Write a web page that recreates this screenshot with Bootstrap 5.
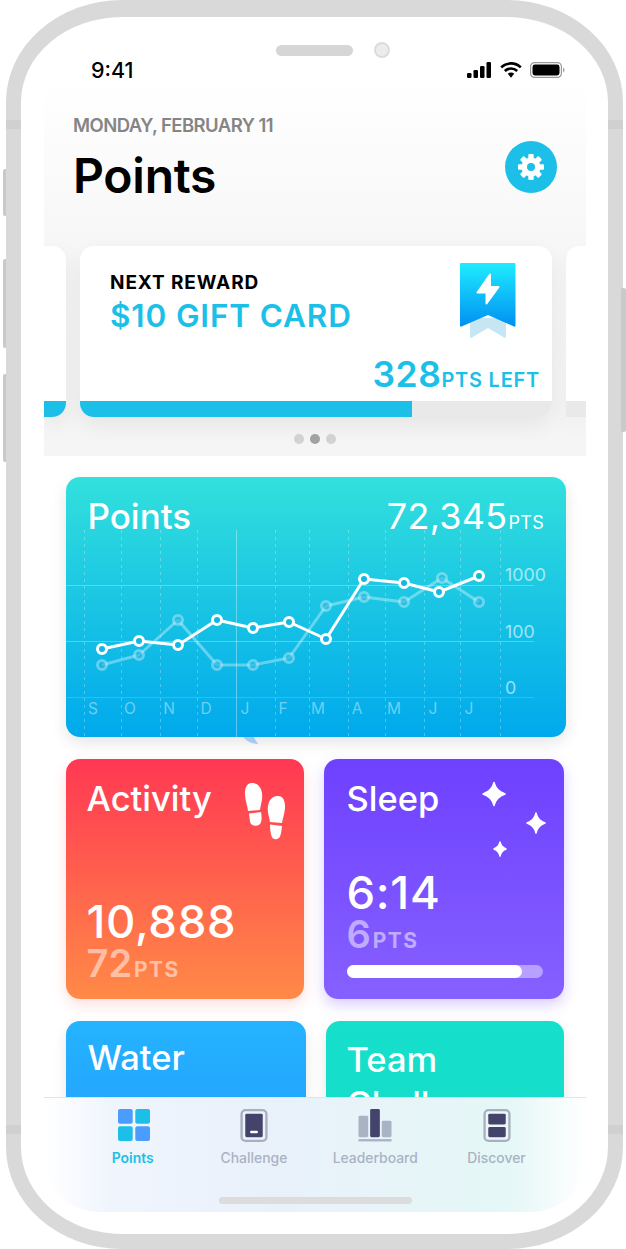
<!DOCTYPE html>
<html lang="en">
<head>
<meta charset="utf-8">
<title>Points</title>
<link href="https://cdn.jsdelivr.net/npm/bootstrap@5.3.0/dist/css/bootstrap.min.css" rel="stylesheet">
<style>
html,body{margin:0;background:#fff;width:626px;height:1249px;overflow:hidden}
body{font-family:Inter,"Noto Sans",sans-serif;color:#000;position:relative}
.phone{position:relative;margin-left:6px;width:617px;height:1249px;border-style:solid;border-color:#d9d9d9;border-width:17px 15px 15px 15px;border-radius:116px/102px;background:#fff;padding:0 22px 0 23px}
.hw{position:absolute;background:#c9c9c9;border-radius:2px;width:5px}
.hw1{left:3px;top:169px;height:47px}.hw2{left:3px;top:259px;height:89px}.hw3{left:3px;top:374px;height:88px}.hw4{left:621px;top:288px;height:144px}
.band{position:absolute;background:#d0d0d0;height:9px;width:15px}
.b1{left:6px;top:120px}.b2{left:608px;top:120px}.b3{left:6px;top:1125px}.b4{left:608px;top:1125px}
.notch{margin-top:25px;height:16px;padding-left:232px;gap:21px}
.speaker{width:77px;height:11px;border-radius:6px;background:#d6d6d6}
.cam{width:16px;height:16px;border-radius:50%;background:#ececec;border:2px solid #dcdcdc}
.status{margin-top:2px;height:20px;padding-left:48px;padding-right:21px}
.clock{font-size:21.5px;font-weight:500;line-height:20px;margin-left:-1px}
.sig{gap:8px}
.screen{position:relative;height:1132px;overflow:hidden;border-radius:0 0 55px 55px}
.head{height:160px;padding:33px 29px 0 29px;background:linear-gradient(#fff,#f7f7f7)}
.date{font-size:18.5px;font-weight:600;color:#858585;line-height:24px;letter-spacing:-.55px;margin-bottom:10px}
.ttl{font-size:48px;font-weight:600;line-height:58px;letter-spacing:-.25px}
.gear{width:52px;height:52px;border-radius:50%;background:#1cbfe7;margin-top:28px}
.reward{height:216px;padding-top:6px;background:linear-gradient(#f7f7f7,#f5f5f5);overflow:hidden}
.rtrack{gap:14px}
.rc{height:171px;background:#fff;box-shadow:0 8px 22px rgba(0,0,0,.07);overflow:hidden;display:flex;flex-direction:column}
.rl{width:22px;border-radius:0 14px 14px 0}
.rm{width:472px;border-radius:14px}
.rr{width:20px;border-radius:14px 0 0 0;box-shadow:0 8px 22px rgba(0,0,0,.04)}
.rtop{padding:25px 36px 0 30px}
.nr{font-size:19px;font-weight:700;line-height:24px;letter-spacing:.9px}
.gc{font-size:31.5px;font-weight:600;line-height:38px;letter-spacing:.85px;color:#1cbfe7;margin-top:2px}
.ribbon{margin-top:-8px}
.left{margin-top:17px;padding-right:12px;color:#1cbfe7;font-weight:600;line-height:40px;align-items:baseline}
.left b{font-weight:600;font-size:35.5px;letter-spacing:.5px}
.left span{font-size:20px;letter-spacing:.75px}
.rbar{height:16px;margin-top:auto;background:#e9e9e9}
.rfill{height:16px;background:#1cbfe7}
.rfill-m{width:332px}
.rfill-l{width:100%}
.dots{gap:6px;margin-top:17px}
.dt{width:10px;height:10px;border-radius:50%;background:#d2d2d2}
.dt-on{background:#a2a2a2}
.pad{padding:21px 0 0 22px;background:#fff;position:relative;height:641px;overflow:hidden}
.chart{position:relative;width:500px;height:260px;border-radius:14px;background:linear-gradient(#32e0dc,#00a9ec);color:#fff;box-shadow:0 6px 16px rgba(0,0,0,.1)}
.chd{height:53px;padding:18px 22px 0 21.5px;font-size:35px;font-weight:500;line-height:42px;overflow:visible}
.chd .big{font-weight:400;letter-spacing:.25px;font-size:36px}
.chd small{font-size:18px;font-weight:400;letter-spacing:.3px;margin-left:1px}
.chart svg{display:block}
.chip{position:absolute;left:177px;top:260px}
.tiles{gap:20px;margin-top:22px}
.tile{position:relative;height:240px;border-radius:14px;color:#fff;padding:18px 20px 11.5px 20.5px;box-shadow:0 6px 14px rgba(0,0,0,.1);overflow:hidden}
.w238{width:238px}.w240{width:240px}
.act{background:linear-gradient(#ff3853,#ff8a47);box-shadow:0 6px 14px rgba(255,80,80,.18)}
.slp{background:linear-gradient(#6e41ff,#8660ff);box-shadow:0 6px 14px rgba(110,65,255,.25);padding-left:22.5px;padding-right:22px;padding-bottom:16px}
.wat{background:linear-gradient(#25b3ff,#1e8ffc);padding-left:21.5px;padding-top:14.5px}
.tea{background:linear-gradient(#16e0cb,#12d8ca);padding-left:20.5px;padding-top:16.5px}
.tname{font-size:34.5px;font-weight:500;line-height:44px}
.tval{font-size:45.5px;font-weight:500;line-height:46px;letter-spacing:.7px}
.tpt{line-height:36px;font-weight:600;color:rgba(255,255,255,.5);align-items:baseline}
.tpt b{font-size:38px;font-weight:600}
.tpt span{font-size:21px;letter-spacing:1.4px;margin-left:2px;font-weight:700}
.tfoot{margin-top:auto}
.sbar{height:13px;border-radius:7px;background:rgba(255,255,255,.42);margin-top:6px;width:196px;margin-bottom:5px}
.sfill{height:13px;border-radius:7px;background:#fff;width:175px}
.feet{position:absolute;left:178px;top:23px}
.stars{position:absolute;left:155px;top:20px}
.tabs{position:absolute;left:0;right:0;top:1017px;height:115px;padding:0 28px;border-top:1px solid #e1e4e8;background:linear-gradient(90deg,#fff,#f0f5fd 12%,#e9f1fb 40%,#e5f7f6 86%,#fff)}
.tab{width:121.3px;text-align:center;padding-top:11px;font-size:13.9px;line-height:18px;color:#aab3c3;font-weight:500}
.tab svg{display:block;margin:0 auto 7px}
.tab-on{color:#1cbfe7;font-weight:600}
.home{position:absolute;left:175px;top:99px;width:193px;height:7px;border-radius:4px;background:#dcdcdc}
</style>
</head>
<body>
<i class="hw hw1"></i><i class="hw hw2"></i><i class="hw hw3"></i>
<div class="phone">
  <div class="notch d-flex align-items-center"><div class="speaker"></div><div class="cam"></div></div>
  <div class="status d-flex justify-content-between align-items-center">
    <div class="clock">9:41</div>
    <div class="sig d-flex align-items-center">
      <svg width="25" height="16" viewBox="0 0 25 16"><g fill="#000"><rect x="0" y="11" width="4.5" height="5" rx="1.2"/><rect x="6.5" y="8" width="4.5" height="8" rx="1.2"/><rect x="13" y="4" width="4.5" height="12" rx="1.2"/><rect x="19.5" y="0" width="4.5" height="16" rx="1.2"/></g></svg>
      <svg width="22" height="16" viewBox="0 0 22 16"><g fill="none" stroke="#000" stroke-width="2.6"><path d="M1.2 5.4a14 14 0 0 1 19.6 0"/><path d="M4.8 9a9 9 0 0 1 12.4 0"/></g><path d="M7.8 11.8a4.6 4.6 0 0 1 6.4 0L11 15.8z" fill="#000"/></svg>
      <svg width="35" height="16" viewBox="0 0 35 16"><rect x=".6" y=".6" width="30.8" height="14.8" rx="4" fill="none" stroke="#9a9a9a" stroke-width="1.2"/><rect x="2.5" y="2.5" width="27" height="11" rx="2.4" fill="#000"/><path d="M33 5.5c1.2.4 1.6 1.4 1.6 2.5s-.4 2.1-1.6 2.5z" fill="#aaa"/></svg>
    </div>
  </div>
  <div class="screen">
    <div class="head d-flex justify-content-between align-items-start">
      <div>
        <div class="date">MONDAY, FEBRUARY 11</div>
        <div class="ttl">Points</div>
      </div>
      <div class="gear d-flex align-items-center justify-content-center">
        <svg width="28" height="28" viewBox="0 0 28 28"><g fill="#fff"><circle cx="14" cy="14" r="9.5"/><rect x="11.3" y="1" width="5.4" height="26" rx="1"/><rect x="11.3" y="1" width="5.4" height="26" rx="1" transform="rotate(45 14 14)"/><rect x="11.3" y="1" width="5.4" height="26" rx="1" transform="rotate(90 14 14)"/><rect x="11.3" y="1" width="5.4" height="26" rx="1" transform="rotate(135 14 14)"/></g><circle cx="14" cy="14" r="4" fill="#1cbfe7"/></svg>
      </div>
    </div>
    <div class="reward">
      <div class="rtrack d-flex">
        <div class="rc rl"><div class="rbar"><div class="rfill rfill-l"></div></div></div>
        <div class="rc rm">
          <div class="rtop d-flex justify-content-between align-items-start">
            <div>
              <div class="nr">NEXT REWARD</div>
              <div class="gc">$10 GIFT CARD</div>
            </div>
            <svg class="ribbon" width="56" height="75" viewBox="461 263 56 75">
              <defs><linearGradient id="rg" x1="0" y1="0" x2="0" y2="1"><stop offset="0" stop-color="#1fecff"/><stop offset="1" stop-color="#0090f2"/></linearGradient></defs>
              <path d="M471 318H507V336.500Q507 338.500 505 337.500L489 328L473 337.500Q471 338.500 471 336.500Z" fill="#c6e6f3"/>
              <path d="M462 263H515.500Q516.500 263 516.500 264V325.500Q516.500 327 515 326.500L489 315L462.500 326.500Q461 327 461 325.500V264Q461 263 462 263Z" fill="url(#rg)"/>
              <path d="M491 274.500L478.500 292.500H487.500V303.500L499.500 287H491Z" fill="#fff" stroke="#fff" stroke-width="2" stroke-linejoin="round"/>
            </svg>
          </div>
          <div class="left d-flex justify-content-end"><b>328</b><span>PTS LEFT</span></div>
          <div class="rbar"><div class="rfill rfill-m"></div></div>
        </div>
        <div class="rc rr"><div class="rbar"></div></div>
      </div>
      <div class="dots d-flex justify-content-center"><div class="dt"></div><div class="dt dt-on"></div><div class="dt"></div></div>
    </div>
    <div class="pad">
      <div class="chart">
        <div class="chd d-flex justify-content-between">
          <div>Points</div>
          <div class="big">72,345<small>PTS</small></div>
        </div>
        <svg width="500" height="207" viewBox="66 530 500 207" font-family="Inter,sans-serif">
          <g stroke="#fff" stroke-opacity=".28" stroke-width="1" fill="none">
            <path d="M66 585.500H534M66 641.500H534"/><path d="M66 697.500H534" stroke-opacity=".16"/>
            <path d="M236.500 530V737" stroke-opacity=".35"/>
            <path stroke-dasharray="3 4" d="M84.500 530V737M121.500 530V737M160.500 530V737M197.500 530V737M275.500 530V737M309.500 530V737M348.500 530V737M385.500 530V737M424.500 530V737M460.500 530V737M500.500 530V737"/>
          </g>
          <g fill="none" stroke="#fff" stroke-opacity=".35" stroke-width="3" stroke-linejoin="round">
            <path d="M102 665L139 655L178 620L217 665L253 665L289 658L326 606L364 597L404 602L442 578L479 602"/>
            <g fill="#1ab4e4" fill-opacity=".5"><circle cx="102" cy="665" r="4.500"/><circle cx="139" cy="655" r="4.500"/><circle cx="178" cy="620" r="4.500"/><circle cx="217" cy="665" r="4.500"/><circle cx="253" cy="665" r="4.500"/><circle cx="289" cy="658" r="4.500"/><circle cx="326" cy="606" r="4.500"/><circle cx="364" cy="597" r="4.500"/><circle cx="404" cy="602" r="4.500"/><circle cx="442" cy="578" r="4.500"/><circle cx="479" cy="602" r="4.500"/></g>
          </g>
          <g fill="#12b8e2" stroke="#fff" stroke-width="3" stroke-linejoin="round">
            <path fill="none" d="M102 649L139 641L178 645L217 620L253 628L289 622L326 639L364 579L404 583L439 592L479 576"/>
            <circle cx="102" cy="649" r="4.500"/><circle cx="139" cy="641" r="4.500"/><circle cx="178" cy="645" r="4.500"/><circle cx="217" cy="620" r="4.500"/><circle cx="253" cy="628" r="4.500"/><circle cx="289" cy="622" r="4.500"/><circle cx="326" cy="639" r="4.500"/><circle cx="364" cy="579" r="4.500"/><circle cx="404" cy="583" r="4.500"/><circle cx="439" cy="592" r="4.500"/><circle cx="479" cy="576" r="4.500"/>
          </g>
          <g fill="#fff" fill-opacity=".6" font-size="17.800"><text x="505" y="581">1000</text><text x="505" y="638">100</text><text x="505" y="694">0</text></g>
          <g fill="#fff" fill-opacity=".42" font-size="15.500" text-anchor="middle"><text x="93" y="714">S</text><text x="130" y="714">O</text><text x="169" y="714">N</text><text x="206" y="714">D</text><text x="245" y="714">J</text><text x="283" y="714">F</text><text x="318" y="714">M</text><text x="357" y="714">A</text><text x="394" y="714">M</text><text x="433" y="714">J</text><text x="469" y="714">J</text></g>
        </svg>
        <svg class="chip" width="16" height="8" viewBox="0 0 16 8"><path d="M0 0H11Q13 5 15.500 7Q6 7 0 0Z" fill="#a8c8f2"/></svg>
      </div>
      <div class="tiles d-flex">
        <div class="tile act w238 d-flex flex-column">
          <div class="tname">Activity</div>
          <svg class="feet" width="42" height="58" viewBox="0 0 42 58"><g fill="#fff"><path d="M9 1C3 0 .5 6 1 13c.4 6 2.500 11 3 16l12 -1c.5-5 3-10 2-17C17 5 14 1.500 9 1Z"/><path d="M5 31.500l12-1.500c1 5 1 10-1.500 12.500C12 45 7 44 6 39.500Z"/><path d="M33 14c6-1 8.500 5 8 12-.4 6-2.500 11-3 15l-12-1c-.5-5-3-9-2-16 1-6 4-9.500 9-10Z"/><path d="M26 42.500l12 1.500c-.5 5-1 9-2.500 11.500-3 3-7 2-8-1.500C26.500 51 26 47 26 42.500Z"/></g></svg>
          <div class="tfoot">
            <div class="tval">10,888</div>
            <div class="tpt d-flex"><b>72</b><span>PTS</span></div>
          </div>
        </div>
        <div class="tile slp w240 d-flex flex-column">
          <div class="tname">Sleep</div>
          <svg class="stars" width="70" height="80" viewBox="0 0 70 80"><g fill="#fff" stroke="#fff" stroke-width="1.500" stroke-linejoin="round"><path d="M15 3.500Q17 12 26 15Q17 18 15 26.500Q13 18 4 15Q13 12 15 3.500Z"/><path d="M57 34Q58.500 41.500 66 44Q58.500 46.500 57 54Q55.500 46.500 48 44Q55.500 41.500 57 34Z"/><path d="M21 63Q22 68 27 70Q22 72 21 77Q20 72 15 70Q20 68 21 63Z"/></g></svg>
          <div class="tfoot">
            <div class="tval">6:14</div>
            <div class="tpt d-flex"><b>6</b><span>PTS</span></div>
            <div class="sbar"><div class="sfill"></div></div>
          </div>
        </div>
      </div>
      <div class="tiles d-flex">
        <div class="tile wat w240"><div class="tname">Water</div></div>
        <div class="tile tea w238"><div class="tname">Team Challenge</div></div>
      </div>
    </div>
    <div class="tabs d-flex">
      <div class="tab tab-on">
        <svg width="34" height="33" viewBox="-2 0 34 33"><rect x="0" y="0" width="14.700" height="14.700" rx="2" fill="#4a9dff"/><rect x="17.300" y="0" width="14.700" height="14.700" rx="2" fill="#1cbfe7"/><rect x="0" y="17.300" width="14.700" height="14.700" rx="2" fill="#1cbfe7"/><rect x="17.300" y="17.300" width="14.700" height="14.700" rx="2" fill="#4a9dff"/></svg>
        Points
      </div>
      <div class="tab">
        <svg width="28" height="33" viewBox="0 0 28 34"><rect x="1.200" y="1.200" width="25.600" height="31.600" rx="4" fill="#eef2f8" stroke="#a6b0c0" stroke-width="2.400"/><rect x="5" y="5" width="18" height="24" rx="1.500" fill="#43436b"/><rect x="10" y="22.500" width="8" height="2.500" rx="1" fill="#fff"/></svg>
        Challenge
      </div>
      <div class="tab">
        <svg width="34" height="33" viewBox="0 0 34 34"><rect x="0" y="7" width="10" height="22" rx="1.500" fill="#a9b3c3"/><rect x="12" y="0" width="10" height="29" rx="1.500" fill="#43436b"/><rect x="24" y="12" width="10" height="17" rx="1.500" fill="#a9b3c3"/><rect x="0" y="31" width="34" height="2.400" fill="#a9b3c3"/></svg>
        Leaderboard
      </div>
      <div class="tab">
        <svg width="28" height="33" viewBox="0 0 28 34"><rect x="1.200" y="1.200" width="25.600" height="31.600" rx="4" fill="#eef6f8" stroke="#a6b0c0" stroke-width="2.400"/><rect x="5" y="5" width="18" height="11" rx="1.500" fill="#43436b"/><rect x="5" y="18.500" width="18" height="10.500" rx="1.500" fill="#43436b"/></svg>
        Discover
      </div>
      <div class="home"></div>
    </div>
  </div>
</div>
<i class="band b1"></i><i class="band b2"></i><i class="band b3"></i><i class="band b4"></i><i class="hw hw4"></i>
</body>
</html>
